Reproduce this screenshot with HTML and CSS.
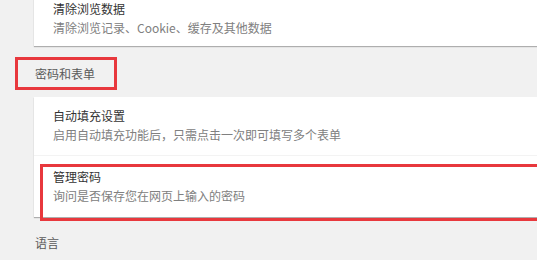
FILE: index.html
```html
<!DOCTYPE html>
<html lang="zh-CN">
<head>
<meta charset="utf-8">
<link rel="stylesheet" href="styles.css">
</head>
<body>
<div class="page">
  <div class="card card-top">
    <div class="row row-first">
      <div class="title">清除浏览数据</div>
      <div class="sub">清除浏览记录、Cookie、缓存及其他数据</div>
    </div>
  </div>

  <div class="section-wrap">
    <div class="section marked">密码和表单</div>
  </div>

  <div class="card">
    <div class="row">
      <div class="title">自动填充设置</div>
      <div class="sub">启用自动填充功能后，只需点击一次即可填写多个表单</div>
    </div>
    <div class="row row-divided">
      <div class="title">管理密码</div>
      <div class="sub">询问是否保存您在网页上输入的密码</div>
      <div class="mark-box"></div>
    </div>
  </div>

  <div class="section plain">语言</div>
</div>
</body>
</html>
```

FILE: styles.css
```css
html, body {
  margin: 0;
  padding: 0;
  background: #f1f1f1;
  overflow: hidden;
}
body {
  font-family: "Noto Sans CJK SC", "Noto Sans", "Liberation Sans", sans-serif;
  font-size: 12px;
  width: 537px;
  height: 260px;
}
.page {
  display: flex;
  flex-direction: column;
}
.card {
  margin-left: 34px;
  background: #ffffff;
  box-shadow: 0 1px 1px rgba(0, 0, 0, 0.28);
}
.card-top {
  margin-top: -10px;
}
.row {
  position: relative;
  padding: 10px 0 11px 19px;
}
.row-first {
  padding-bottom: 9px;
}
.row-divided {
  border-top: 1px solid #f3f3f3;
  padding-top: 12px;
  padding-bottom: 12px;
}
.title {
  color: #333333;
  line-height: 18px;
}
.sub {
  color: #808080;
  line-height: 18px;
  margin-top: 1px;
}
.section-wrap {
  display: flex;
  padding: 11px 0 7px 15px;
}
.section {
  color: #5a5a5a;
  line-height: 18px;
}
.marked {
  border: 3px solid #e8383d;
  padding: 5px 19px 4px 17px;
}
.plain {
  padding: 17px 0 0 35px;
}
.mark-box {
  position: absolute;
  left: 6px;
  right: 0;
  top: 8px;
  bottom: -4px;
  border: 3px solid #e8383d;
  border-right: none;
  pointer-events: none;
}
```
